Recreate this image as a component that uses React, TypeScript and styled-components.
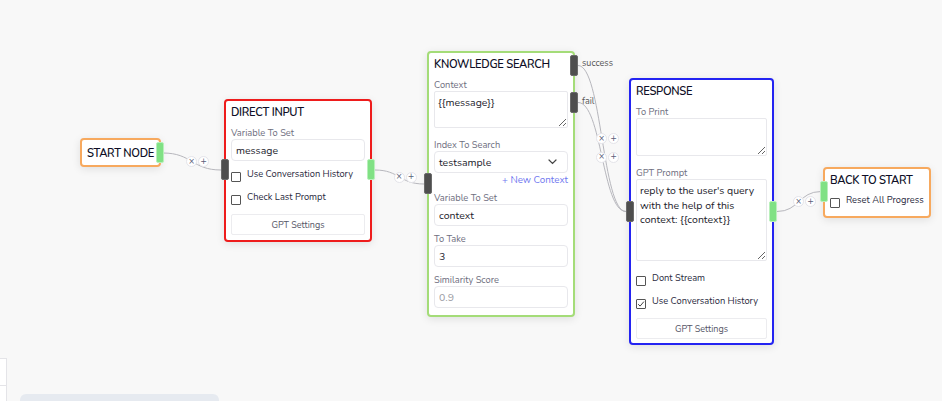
import React from 'react';
import styled, { createGlobalStyle } from 'styled-components';

const GlobalStyle = createGlobalStyle`
    html, body {
        margin: 0;
        padding: 0;
        background: #f8f8f8;
    }
    body {
        font-family: 'Nunito', Lato, 'Noto Sans', sans-serif;
        color: #16162e;
    }
`;

const Canvas = styled.div`
    position: relative;
    width: 942px;
    height: 401px;
    overflow: hidden;
    background: #f8f8f8;
`;

const EdgeLayer = styled.svg`
    position: absolute;
    left: 0;
    top: 0;
    width: 942px;
    height: 401px;
    pointer-events: none;
`;

const Node = styled.div<{ $x: number; $y: number; $w: number; $color: string; $pb?: number }>`
    position: absolute;
    left: ${(p) => p.$x}px;
    top: ${(p) => p.$y}px;
    width: ${(p) => p.$w}px;
    box-sizing: border-box;
    border: 2px solid ${(p) => p.$color};
    border-radius: 4px;
    background: #fff;
    box-shadow: 0 2px 8px rgba(0, 0, 0, 0.1);
    padding: 4px 5px ${(p) => p.$pb ?? 5}px 5px;
    display: flex;
    flex-direction: column;
`;

const StartBox = styled(Node)`
    padding: 1px 5px 0;
    height: 29px;
    justify-content: center;
`;

const Title = styled.div`
    font-size: 11.2px;
    font-weight: 600;
    line-height: 16px;
    letter-spacing: -0.3px;
    color: #0e0e26;
    text-transform: uppercase;
    white-space: nowrap;
    margin-bottom: -1px;
`;

const Field = styled.div`
    display: flex;
    flex-direction: column;
    margin-top: 7px;
`;

const Label = styled.label`
    font-size: 9.3px;
    line-height: 12px;
    color: #6e6e7e;
    white-space: nowrap;
`;

const TextInput = styled.input<{ $muted?: boolean }>`
    box-sizing: border-box;
    width: 100%;
    height: 22px;
    border: 1px solid #e8e8ec;
    border-radius: 4px;
    padding: 0 4px;
    font-family: inherit;
    font-size: 10.5px;
    color: ${(p) => (p.$muted ? '#9a9aa2' : '#1c1c2c')};
    background: #fff;
    outline: none;
`;

const TextArea = styled.textarea<{ $h: number }>`
    display: block;
    box-sizing: border-box;
    width: 100%;
    height: ${(p) => p.$h}px;
    border: 1px solid #e8e8ec;
    border-radius: 2px;
    padding: 4px 3px;
    font-family: inherit;
    font-size: 10.5px;
    line-height: 14.5px;
    color: #1c1c2c;
    background: #fff;
    outline: none;
    resize: vertical;
    margin-bottom: 4px;
`;

const SelectBox = styled.div`
    box-sizing: border-box;
    height: 22px;
    border: 1px solid #e8e8ec;
    border-radius: 4px;
    padding: 0 10px 0 4px;
    display: flex;
    align-items: center;
    justify-content: space-between;
    font-size: 10.5px;
    color: #1c1c2c;
`;

const NewContext = styled.div`
    align-self: flex-end;
    font-size: 9.8px;
    line-height: 12px;
    color: #7078f0;
    margin-top: 1px;
    margin-bottom: -1px;
`;

const CheckRow = styled.div<{ $mt: number }>`
    display: flex;
    align-items: flex-start;
    gap: 6px;
    margin-top: ${(p) => p.$mt}px;
    font-size: 9.3px;
    line-height: 12px;
    color: #2a2a40;
    white-space: nowrap;
`;

const Box = styled.span`
    box-sizing: border-box;
    flex: none;
    width: 10px;
    height: 10px;
    margin-top: 4px;
    border: 1px solid #555;
    border-radius: 1px;
    background: #fff;
    display: flex;
    align-items: center;
    justify-content: center;
`;

const ActionButton = styled.div<{ $mt: number }>`
    box-sizing: border-box;
    height: 21px;
    margin-top: ${(p) => p.$mt}px;
    border: 1px solid #ececef;
    border-radius: 2px;
    background: #fff;
    display: flex;
    align-items: center;
    justify-content: center;
    font-size: 9px;
    color: #555566;
`;

const Handle = styled.div<{ $side: 'left' | 'right'; $top: number; $source?: boolean }>`
    position: absolute;
    ${(p) => p.$side}: -5px;
    top: ${(p) => p.$top}px;
    width: 8px;
    height: 21px;
    box-sizing: border-box;
    border-radius: 2px;
    background: ${(p) => (p.$source ? '#80e184' : '#4e4e4e')};
    border: 1px solid ${(p) => (p.$source ? '#b9f0bb' : '#6a6a6a')};
`;

const HandleLabel = styled.span<{ $top: number }>`
    position: absolute;
    left: calc(100% + 9px);
    top: ${(p) => p.$top}px;
    font-size: 9px;
    line-height: 10px;
    color: #555;
`;

const EdgeButton = styled.div<{ $x: number; $y: number }>`
    position: absolute;
    left: ${(p) => p.$x - 5.5}px;
    top: ${(p) => p.$y - 5.5}px;
    width: 11px;
    height: 11px;
    box-sizing: border-box;
    border-radius: 50%;
    border: 1px solid #e4e4ea;
    background: #fff;
    display: flex;
    align-items: center;
    justify-content: center;
    font-family: 'DejaVu Sans', sans-serif;
    font-size: 8px;
    line-height: 1;
    color: #5a5f7a;
`;

const SidePanel = styled.div`
    position: absolute;
    left: -1px;
    top: 358px;
    width: 6px;
    height: 50px;
    background: #fff;
    border: 1px solid #e4e4e8;
    display: flex;
    flex-direction: column;
`;

const PanelDivider = styled.div`
    height: 26px;
    border-bottom: 1px solid #e4e4e8;
`;

const BottomBar = styled.div`
    position: absolute;
    left: 20px;
    top: 394px;
    width: 199px;
    height: 20px;
    border-radius: 6px;
    background: #e6eaf0;
`;

const curve = (sx: number, sy: number, tx: number, ty: number) => {
    const c = (tx - sx) / 2;
    return `M${sx},${sy} C${sx + c},${sy} ${tx - c},${ty} ${tx},${ty}`;
};

const edges = [
    { sx: 163, sy: 153, tx: 221, ty: 170 },
    { sx: 375, sy: 170, tx: 424, ty: 184 },
    { sx: 578, sy: 65.5, tx: 626, ty: 211.5 },
    { sx: 578, sy: 102.5, tx: 626, ty: 211.5 },
    { sx: 777, sy: 211.5, tx: 821, ty: 191.5 },
];

const Chevron = () => (
    <svg width="9" height="6" viewBox="0 0 9 6" fill="none">
        <path d="M1 1l3.5 3.5L8 1" stroke="#444" strokeWidth="1.2" strokeLinecap="round" />
    </svg>
);

const Check = () => (
    <svg width="8" height="8" viewBox="0 0 8 8" fill="none">
        <path d="M1.2 4.2l1.9 1.9L6.9 1.6" stroke="#444" strokeWidth="1" />
    </svg>
);

const CheckItem: React.FC<{ label: string; checked?: boolean; mt: number }> = ({ label, checked, mt }) => (
    <CheckRow $mt={mt}>
        <Box>{checked && <Check />}</Box>
        <span>{label}</span>
    </CheckRow>
);

const App: React.FC = () => {
    return (
        <>
            <GlobalStyle />
            <Canvas>
                <EdgeLayer>
                    {edges.map((e, i) => (
                        <path key={i} d={curve(e.sx, e.sy, e.tx, e.ty)} stroke="#b7b7bd" strokeWidth="1" fill="none" />
                    ))}
                </EdgeLayer>

                {edges.map((e, i) => {
                    const mx = (e.sx + e.tx) / 2;
                    const my = (e.sy + e.ty) / 2;
                    return (
                        <React.Fragment key={i}>
                            <EdgeButton $x={mx - 0.5} $y={my}>×</EdgeButton>
                            <EdgeButton $x={mx + 11.5} $y={my}>+</EdgeButton>
                        </React.Fragment>
                    );
                })}

                <StartBox $x={80} $y={138} $w={81} $color="#f7a95e">
                    <Title>Start Node</Title>
                    <Handle $side="right" $top={2} $source />
                </StartBox>

                <Node $x={224} $y={99} $w={148} $color="#ee1c1c">
                    <Title>Direct Input</Title>
                    <Field>
                        <Label>Variable To Set</Label>
                        <TextInput readOnly value="message" />
                    </Field>
                    <CheckItem label="Use Conversation History" mt={7} />
                    <CheckItem label="Check Last Prompt" mt={9} />
                    <ActionButton $mt={9}>GPT Settings</ActionButton>
                    <Handle $side="left" $top={58} />
                    <Handle $side="right" $top={58} $source />
                </Node>

                <Node $x={427} $y={51} $w={148} $color="#a4dc78" $pb={7}>
                    <Title>Knowledge Search</Title>
                    <Field>
                        <Label>Context</Label>
                        <TextArea $h={37} readOnly value="{{message}}" />
                    </Field>
                    <Field>
                        <Label>Index To Search</Label>
                        <SelectBox>
                            <span>testsample</span>
                            <Chevron />
                        </SelectBox>
                        <NewContext>+ New Context</NewContext>
                    </Field>
                    <Field>
                        <Label>Variable To Set</Label>
                        <TextInput readOnly value="context" />
                    </Field>
                    <Field>
                        <Label>To Take</Label>
                        <TextInput readOnly value="3" />
                    </Field>
                    <Field>
                        <Label>Similarity Score</Label>
                        <TextInput readOnly value="0.9" $muted />
                    </Field>
                    <Handle $side="left" $top={120} />
                    <Handle $side="right" $top={2} />
                    <HandleLabel $top={5}>success</HandleLabel>
                    <Handle $side="right" $top={39} />
                    <HandleLabel $top={43}>fail</HandleLabel>
                </Node>

                <Node $x={629} $y={78} $w={145} $color="#2424f2" $pb={4}>
                    <Title>Response</Title>
                    <Field>
                        <Label>To Print</Label>
                        <TextArea $h={38} readOnly value="" />
                    </Field>
                    <Field>
                        <Label>GPT Prompt</Label>
                        <TextArea $h={82} readOnly value="reply to the user's query with the help of this context: {{context}}" />
                    </Field>
                    <CheckItem label="Dont Stream" mt={7} />
                    <CheckItem label="Use Conversation History" checked mt={9} />
                    <ActionButton $mt={9}>GPT Settings</ActionButton>
                    <Handle $side="left" $top={121} />
                    <Handle $side="right" $top={121} $source />
                </Node>

                <Node $x={823} $y={167} $w={108} $color="#f7a95e" $pb={8}>
                    <Title>Back To Start</Title>
                    <CheckItem label="Reset All Progress" mt={6} />
                    <Handle $side="left" $top={12} $source />
                </Node>

                <SidePanel>
                    <PanelDivider />
                </SidePanel>
                <BottomBar />
            </Canvas>
        </>
    );
};

export default App;
